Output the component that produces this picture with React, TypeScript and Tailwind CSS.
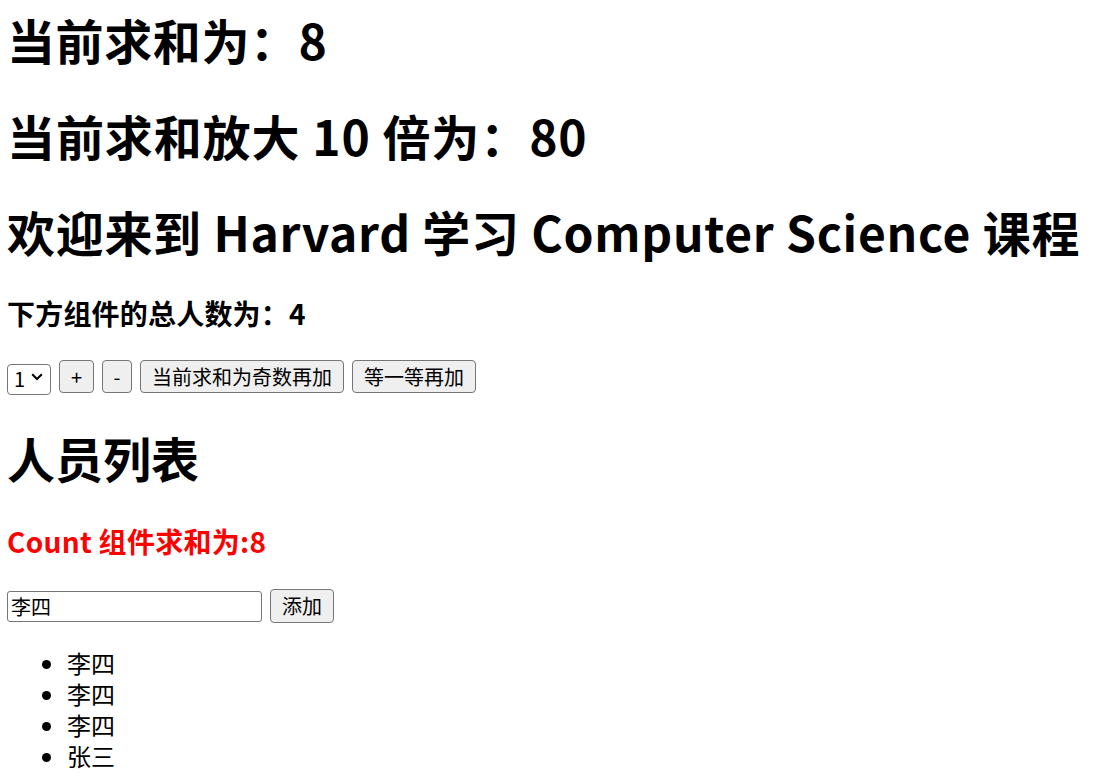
import { useState } from 'react'

function Btn({ children, onClick, className = '' }: { children: React.ReactNode; onClick?: () => void; className?: string }) {
  return (
    <button
      onClick={onClick}
      className={`flex h-[33px] items-center justify-center rounded-[4px] border border-[#767676] bg-[#efefef] px-[9px] text-[20px] leading-[26px] text-black ${className}`}
    >
      {children}
    </button>
  )
}

export default function App() {
  const [step, setStep] = useState(1)
  const [sum, setSum] = useState(8)
  const [name, setName] = useState('李四')
  const [people, setPeople] = useState(['李四', '李四', '李四', '张三'])

  return (
    <div className="min-h-screen bg-white px-[7px] pt-[8px] text-[24px] leading-[31px] text-black [font-family:'Noto_Sans_CJK_SC',sans-serif]">
      <h1 className="text-[48px] font-bold leading-[63px] tracking-[0.6px]">当前求和为：{sum}</h1>
      <h1 className="mt-[33px] text-[48px] font-bold leading-[63px] tracking-[0.9px]">当前求和放大 10 倍为：{sum * 10}</h1>
      <h1 className="mt-[33px] whitespace-nowrap text-[48px] font-bold leading-[63px] tracking-[0.7px]">
        欢迎来到 Harvard 学习 Computer Science 课程
      </h1>
      <h3 className="mt-8 text-[28px] font-bold leading-[37px] tracking-[0.2px]">下方组件的总人数为：{people.length}</h3>

      <div className="mt-7 flex items-center gap-2">
        <div className="relative h-[31px] w-[44px]">
          <select
            value={step}
            onChange={(e) => setStep(Number(e.target.value))}
            className="h-full w-full appearance-none rounded-[4px] border border-[#767676] bg-white pl-[6px] text-[20px] leading-[26px] text-black"
          >
            <option value={1}>1</option>
            <option value={2}>2</option>
            <option value={3}>3</option>
          </select>
          <svg
            className="pointer-events-none absolute right-[8px] top-[12px]"
            width="12"
            height="8"
            viewBox="0 0 12 8"
            fill="none"
          >
            <path d="M1.2 1.2L6 6l4.8-4.8" stroke="#000" strokeWidth="2" />
          </svg>
        </div>
        <Btn onClick={() => setSum(sum + step)} className="w-[35px]">+</Btn>
        <Btn onClick={() => setSum(sum - step)} className="w-[30px]">-</Btn>
        <Btn onClick={() => sum % 2 && setSum(sum + step)} className="w-[204px]">当前求和为奇数再加</Btn>
        <Btn onClick={() => setTimeout(() => setSum((s) => s + step), 500)} className="w-[124px]">等一等再加</Btn>
      </div>

      <h1 className="mt-[33px] text-[48px] font-bold leading-[63px]">人员列表</h1>
      <h3 className="mt-[34px] text-[28px] font-bold leading-[37px] tracking-[0.3px] text-[#ff0000]">Count 组件求和为:{sum}</h3>

      <div className="mt-[29px] flex items-center gap-2">
        <input
          value={name}
          onChange={(e) => setName(e.target.value)}
          className="h-[31px] w-[255px] rounded-[3px] border border-[#767676] px-[3px] text-[20px] text-black outline-none"
        />
        <Btn onClick={() => name && setPeople([name, ...people])} className="h-[34px] w-[64px]">添加</Btn>
      </div>

      <ul className="mt-6 list-disc pl-[60px]">
        {people.map((p, i) => (
          <li key={i} className="leading-[31px]">{p}</li>
        ))}
      </ul>
    </div>
  )
}
